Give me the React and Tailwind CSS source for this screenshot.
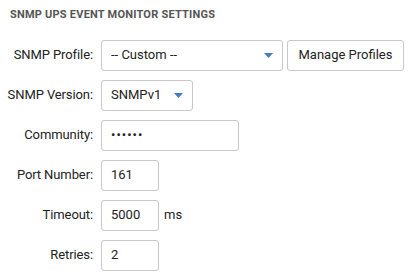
import React from "react";

function Caret() {
  return (
    <svg width="9" height="5" viewBox="0 0 9 5" className="shrink-0">
      <path d="M0 0 H9 L4.5 5 Z" fill="#3f7fc1" />
    </svg>
  );
}

function Row({ label, children }) {
  return (
    <div className="flex h-[30px] items-center">
      <div className="flex w-[83px] shrink-0 justify-end whitespace-nowrap text-[13px] tracking-[-0.1px] text-[#222]">{label}</div>
      <div className="ml-[8px] flex h-full items-center">{children}</div>
    </div>
  );
}

const box = "flex h-[31px] items-center rounded-[3px] border border-[#c8c8c8] bg-white px-[9px] text-[13px] text-[#222] whitespace-nowrap";

export default function App() {
  return (
    <div
      className="h-[278px] w-[410px] bg-white px-[10px]"
      style={{ fontFamily: 'Roboto, "Liberation Sans", sans-serif' }}
    >
      <div className="flex h-[30px] items-center pt-[1px] text-[11px] font-bold tracking-[0.02em] text-[#555]">
        SNMP UPS EVENT MONITOR SETTINGS
      </div>
      <div className="mt-[10px] flex flex-col gap-[10px]">
        <Row label="SNMP Profile:">
          <div className={`${box} w-[182px] justify-between`}>
            <span>-- Custom --</span>
            <Caret />
          </div>
          <div className={`${box} ml-[4px] w-[117px] justify-center`}>Manage Profiles</div>
        </Row>
        <Row label="SNMP Version:">
          <div className={`${box} w-[92px] justify-between`}>
            <span>SNMPv1</span>
            <Caret />
          </div>
        </Row>
        <Row label="Community:">
          <div className={`${box} w-[138px] tracking-[1px]`}>••••••</div>
        </Row>
        <Row label="Port Number:">
          <div className={`${box} w-[58px]`}>161</div>
        </Row>
        <Row label="Timeout:">
          <div className={`${box} w-[58px]`}>5000</div>
          <span className="ml-[5px] text-[13px] text-[#222]">ms</span>
        </Row>
        <Row label="Retries:">
          <div className={`${box} w-[58px]`}>2</div>
        </Row>
      </div>
    </div>
  );
}
